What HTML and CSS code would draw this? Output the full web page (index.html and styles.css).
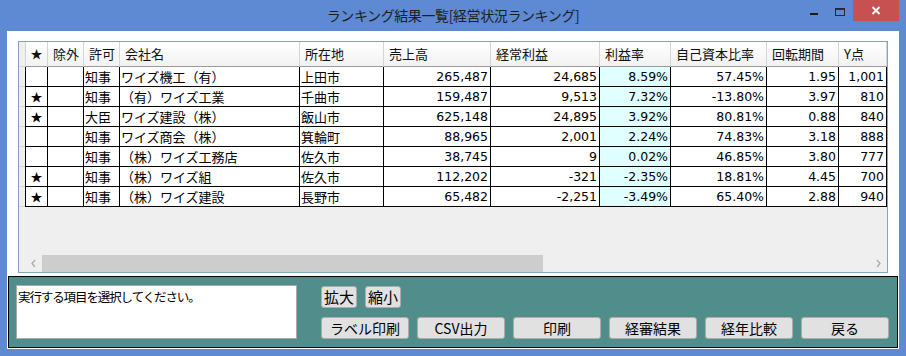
FILE: index.html
```html
<!DOCTYPE html>
<html lang="ja">
<head>
<meta charset="utf-8">
<title>ランキング結果一覧</title>
<link rel="stylesheet" href="styles.css">
</head>
<body>
<div class="window">
  <div class="titlebar">
    <div></div>
    <div class="title">ランキング結果一覧[経営状況ランキング]</div>
    <div class="controls">
      <div class="ctl ctl-min"><span class="dash"></span></div>
      <div class="ctl ctl-max"><span class="box"></span></div>
      <div class="ctl ctl-close">
        <svg width="10" height="9" viewBox="0 0 10 9"><path d="M1.5 1 L8.5 8 M8.5 1 L1.5 8" stroke="#fff" stroke-width="1.8" fill="none"/></svg>
      </div>
    </div>
  </div>
  <div class="client">
    <div class="gridbox">
      <div class="gridmain">
        <div class="hrow">
          <div class="rh"></div>
          <div class="h hstar">★</div>
          <div class="h">除外</div>
          <div class="h">許可</div>
          <div class="h">会社名</div>
          <div class="h">所在地</div>
          <div class="h">売上高</div>
          <div class="h">経常利益</div>
          <div class="h">利益率</div>
          <div class="h">自己資本比率</div>
          <div class="h">回転期間</div>
          <div class="h">Y点</div>
        </div>
        <div class="brow">
          <div class="rh"></div><div class="c star"></div><div class="c"></div><div class="c">知事</div><div class="c">ワイズ機工（有）</div><div class="c">上田市</div><div class="c num">265,487</div><div class="c num">24,685</div><div class="c num rate">8.59%</div><div class="c num">57.45%</div><div class="c num">1.95</div><div class="c num">1,001</div>
        </div>
        <div class="brow">
          <div class="rh"></div><div class="c star">★</div><div class="c"></div><div class="c">知事</div><div class="c">（有）ワイズ工業</div><div class="c">千曲市</div><div class="c num">159,487</div><div class="c num">9,513</div><div class="c num rate">7.32%</div><div class="c num">-13.80%</div><div class="c num">3.97</div><div class="c num">810</div>
        </div>
        <div class="brow">
          <div class="rh"></div><div class="c star">★</div><div class="c"></div><div class="c">大臣</div><div class="c">ワイズ建設（株）</div><div class="c">飯山市</div><div class="c num">625,148</div><div class="c num">24,895</div><div class="c num rate">3.92%</div><div class="c num">80.81%</div><div class="c num">0.88</div><div class="c num">840</div>
        </div>
        <div class="brow">
          <div class="rh"></div><div class="c star"></div><div class="c"></div><div class="c">知事</div><div class="c">ワイズ商会（株）</div><div class="c">箕輪町</div><div class="c num">88,965</div><div class="c num">2,001</div><div class="c num rate">2.24%</div><div class="c num">74.83%</div><div class="c num">3.18</div><div class="c num">888</div>
        </div>
        <div class="brow">
          <div class="rh"></div><div class="c star"></div><div class="c"></div><div class="c">知事</div><div class="c">（株）ワイズ工務店</div><div class="c">佐久市</div><div class="c num">38,745</div><div class="c num">9</div><div class="c num rate">0.02%</div><div class="c num">46.85%</div><div class="c num">3.80</div><div class="c num">777</div>
        </div>
        <div class="brow">
          <div class="rh"></div><div class="c star">★</div><div class="c"></div><div class="c">知事</div><div class="c">（株）ワイズ組</div><div class="c">佐久市</div><div class="c num">112,202</div><div class="c num">-321</div><div class="c num rate">-2.35%</div><div class="c num">18.81%</div><div class="c num">4.45</div><div class="c num">700</div>
        </div>
        <div class="brow">
          <div class="rh"></div><div class="c star">★</div><div class="c"></div><div class="c">知事</div><div class="c">（株）ワイズ建設</div><div class="c">長野市</div><div class="c num">65,482</div><div class="c num">-2,251</div><div class="c num rate">-3.49%</div><div class="c num">65.40%</div><div class="c num">2.88</div><div class="c num">940</div>
        </div>
      </div>
      <div class="hscroll">
        <div class="arrow"><svg width="5" height="9" viewBox="0 0 5 9"><path d="M4 1 L1 4.5 L4 8" stroke="#a6a6a6" stroke-width="1.2" fill="none"/></svg></div>
        <div class="track"><div class="thumb"></div></div>
        <div class="arrow"><svg width="5" height="9" viewBox="0 0 5 9"><path d="M1 1 L4 4.5 L1 8" stroke="#a6a6a6" stroke-width="1.2" fill="none"/></svg></div>
      </div>
    </div>
    <div class="panel">
      <div class="msg">実行する項目を選択してください。</div>
      <div class="btns">
        <div class="btnrow">
          <button class="btn small">拡大</button>
          <button class="btn small">縮小</button>
        </div>
        <div class="btnrow">
          <button class="btn wide">ラベル印刷</button>
          <button class="btn wide">CSV出力</button>
          <button class="btn wide">印刷</button>
          <button class="btn wide">経審結果</button>
          <button class="btn wide">経年比較</button>
          <button class="btn wide">戻る</button>
        </div>
      </div>
    </div>
  </div>
</div>
</body>
</html>
```

FILE: styles.css
```css
html, body {
  margin: 0;
  padding: 0;
}
body {
  width: 906px;
  height: 356px;
  overflow: hidden;
  background: #5d8ad3;
  font-family: "Noto Sans CJK JP", "Noto Sans", sans-serif;
  color: #000;
}
.window {
  display: flex;
  flex-direction: column;
  height: 356px;
}
.titlebar {
  height: 31px;
  display: grid;
  grid-template-columns: 1fr auto 1fr;
  align-items: start;
}
.title {
  font-size: 14px;
  letter-spacing: -0.4px;
  line-height: 31px;
  color: #1e1e1e;
  white-space: nowrap;
}
.controls {
  justify-self: end;
  display: flex;
  margin-right: 7px;
  height: 21px;
}
.ctl {
  width: 26px;
  height: 21px;
  display: flex;
  justify-content: center;
  align-items: flex-start;
  box-sizing: border-box;
}
.ctl-min {
  padding-top: 13px;
}
.ctl-min .dash {
  width: 8px;
  height: 2px;
  background: #1a1a1a;
}
.ctl-max {
  padding-top: 8px;
}
.ctl-max .box {
  width: 10px;
  height: 8px;
  box-sizing: border-box;
  border: 1px solid #2a2a2a;
  border-top-width: 2px;
}
.ctl-close {
  width: 46px;
  background: #c75050;
  align-items: center;
}
.client {
  flex: 1;
  margin: 0 7px 7px 7px;
  background: #fff;
  display: flex;
  flex-direction: column;
}
.gridbox {
  margin: 10px 11px 0 11px;
  height: 232px;
  box-sizing: border-box;
  border: 1px solid #86a2c6;
  background: #efefef;
  display: flex;
  flex-direction: column;
}
.gridmain {
  flex: 1;
  overflow: hidden;
}
.hrow, .brow {
  display: grid;
  grid-template-columns: 6px 23px 36px 36px 180px 84px 107px 109px 71px 96px 72px 48px;
}
.hrow {
  height: 25px;
}
.rh {
  background: #efefef;
  box-sizing: border-box;
  border-bottom: 1px solid #d9d9d9;
}
.h {
  box-sizing: border-box;
  background: linear-gradient(#ffffff, #f2f2f2);
  border-right: 1px solid #d5d5d5;
  border-bottom: 1px solid #9a9a9a;
  font-size: 13px;
  line-height: 24px;
  padding-left: 5px;
  white-space: nowrap;
  color: #111;
}
.hstar {
  border-left: 1px solid #d5d5d5;
  padding-left: 0;
  text-align: center;
  font-size: 12px;
}
.brow {
  height: 20px;
}
.c {
  box-sizing: border-box;
  background: #fff;
  border-right: 1px solid #000;
  border-bottom: 1px solid #000;
  font-size: 13px;
  line-height: 19px;
  padding: 0 1px;
  white-space: nowrap;
  overflow: hidden;
}
.star {
  border-left: 1px solid #000;
  text-align: center;
  font-size: 12px;
  padding: 0;
}
.num {
  text-align: right;
  font-family: "DejaVu Sans", "Liberation Sans", sans-serif;
  font-size: 12.5px;
  padding-right: 2px;
}
.rate {
  background: #e0ffff;
}
.hscroll {
  height: 17px;
  margin-left: 6px;
  display: flex;
}
.arrow {
  width: 17px;
  display: flex;
  align-items: center;
  justify-content: center;
}
.track {
  flex: 1;
  display: flex;
}
.thumb {
  width: 501px;
  background: #cdcdcd;
}
.panel {
  flex: 1;
  margin: 3px 1px 1px 1px;
  border: 1px solid #000;
  background: #508d8b;
  display: flex;
  align-items: flex-start;
  padding: 8px 0 0 7px;
}
.msg {
  width: 281px;
  height: 54px;
  box-sizing: border-box;
  border: 1px solid #a9a9a9;
  background: #fff;
  font-size: 12.5px;
  letter-spacing: -1.1px;
  line-height: 17px;
  padding: 2px 1px;
  white-space: nowrap;
}
.btns {
  margin-left: 24px;
  padding-top: 1px;
  display: flex;
  flex-direction: column;
  gap: 9px;
}
.btnrow {
  display: flex;
  gap: 8px;
}
.btn {
  height: 22px;
  box-sizing: border-box;
  background: #e1e1e1;
  border: 1px solid #adadad;
  border-radius: 3px;
  padding: 0;
  margin: 0;
  font-family: "Noto Sans CJK JP", sans-serif;
  font-size: 14px;
  line-height: 20px;
  color: #000;
}
.small {
  width: 36px;
  font-size: 15px;
}
.wide {
  width: 88px;
}
```
